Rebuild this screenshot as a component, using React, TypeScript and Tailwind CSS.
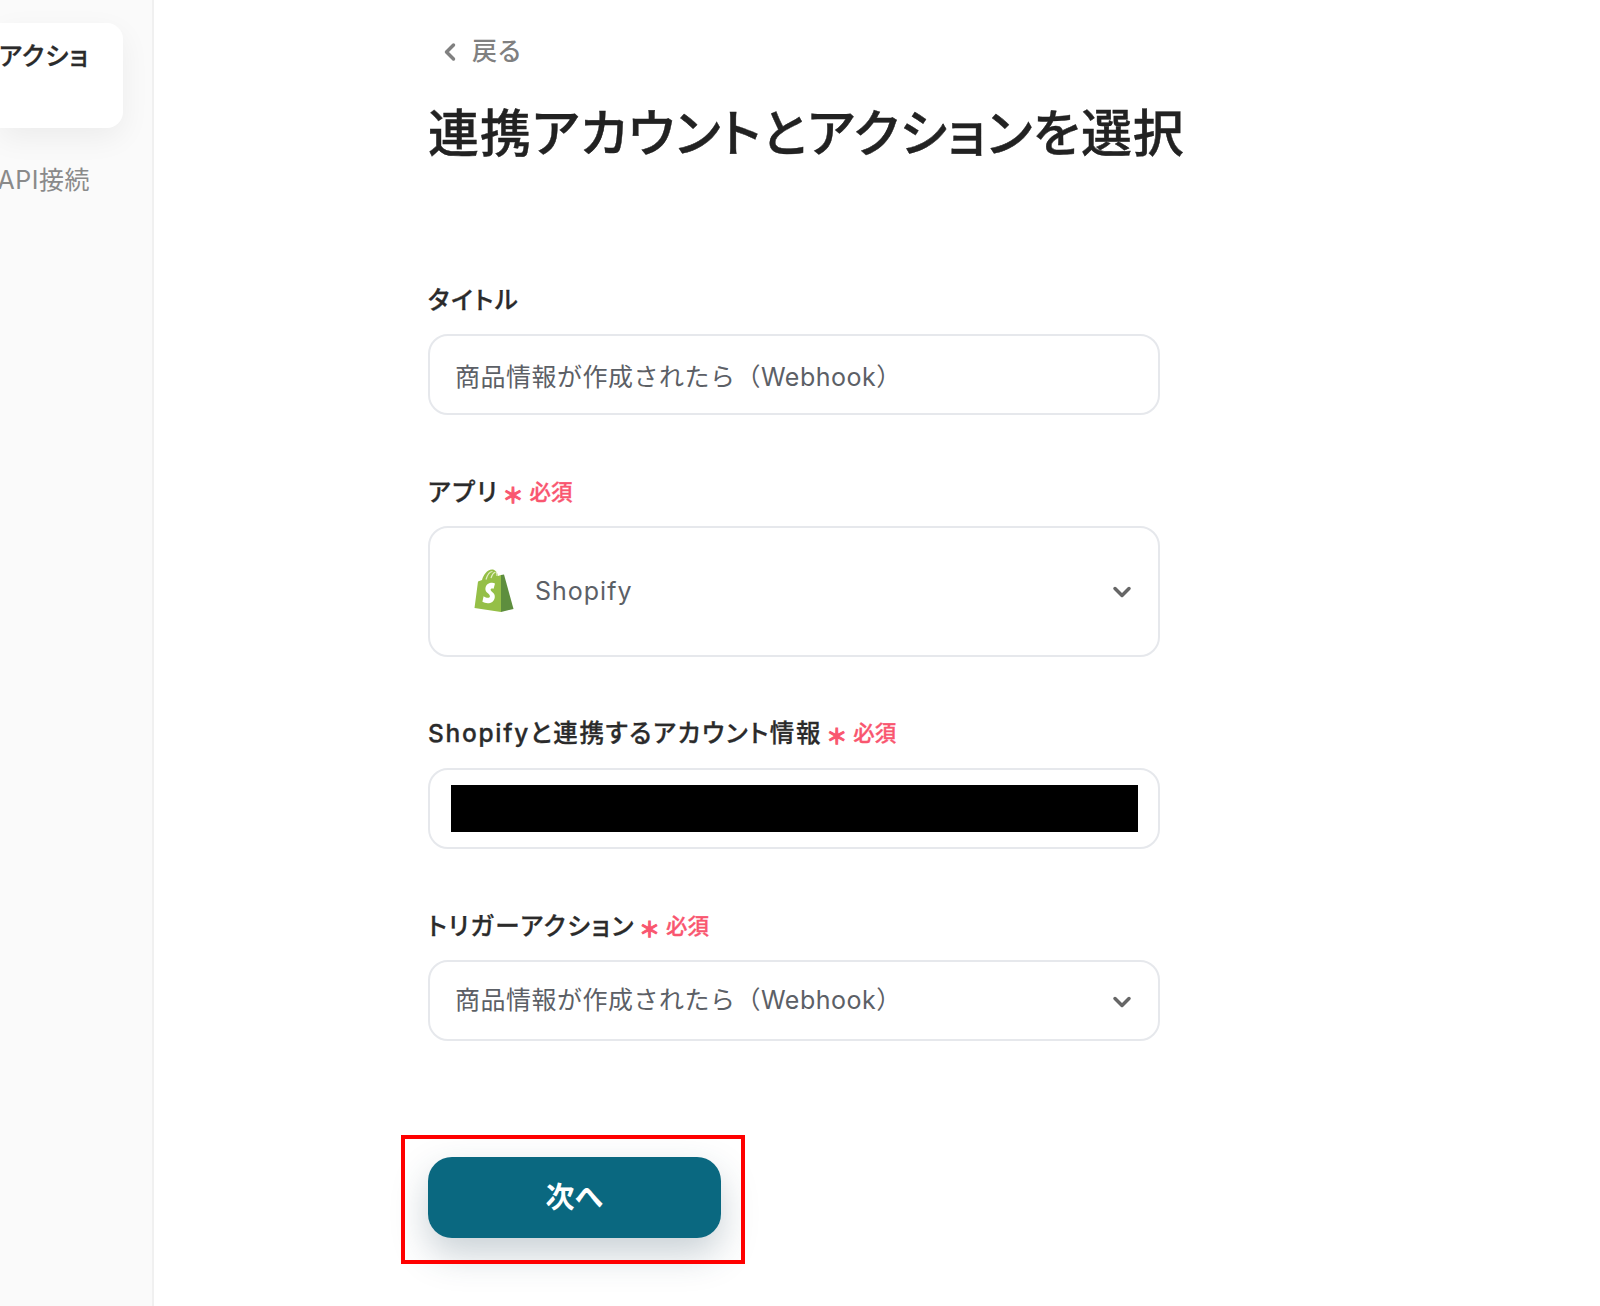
import { ChevronDown, ChevronLeft } from "lucide-react"

const fontClass = "font-['Inter','Noto_Sans_CJK_JP',sans-serif]"

function Required() {
  return (
    <span className="ml-[6px] flex items-center text-[#f9566f] [font-feature-settings:'palt']">
      <span className="text-[21px] leading-none font-bold translate-y-[3px] [-webkit-text-stroke:1px_#f9566f]">＊</span>
      <span className="ml-[6px] text-[21.5px] leading-none font-medium tracking-normal translate-y-[1px] [-webkit-text-stroke:0.3px_#f9566f]">必須</span>
    </span>
  )
}

function Label({ text, required }: { text: string; required?: boolean }) {
  return (
    <div className="flex h-8 items-center text-[24.5px] leading-8 font-medium tracking-[1.7px] whitespace-nowrap text-[#2b2b2b] [font-feature-settings:'palt'] [-webkit-text-stroke:0.3px_#2b2b2b]">
      <span>{text}</span>
      {required && <Required />}
    </div>
  )
}

function ShopifyLogo() {
  return (
    <svg width="40" height="44" viewBox="0 0 40 44" className="shrink-0 -translate-y-[2px]">
      <path d="M27 7 L30 6.5 L39.5 41 L27 44 Z" fill="#5e8e3e" />
      <path d="M27 7 L24 8 C23 4 21 1.5 18 1.5 C13 1.5 9.5 7 8 12 L4 13.5 L0.5 40 L27 44 Z" fill="#95bf47" />
      <path d="M12 11.5 C13.5 6.5 16 3.5 18.5 3.5 M17 10 C18 7 19 5 21 4.2 M23 8 C23.2 6 22.6 4.5 21.8 3.8" fill="none" stroke="#e4efc6" strokeWidth="1.2" />
      <path
        d="M21 15.5 C18 14 12 15 11.4 20.5 C11 25 16.2 25.6 15.9 28.4 C15.7 30.2 12.8 30.4 9.6 28.2 L8.4 33.8 C12.5 36.2 20 36 20.8 29.2 C21.3 24.6 16.4 24 16.6 21.6 C16.7 20.4 18.4 20 19.6 20.8 Z"
        fill="#ffffff"
      />
    </svg>
  )
}

export default function App() {
  return (
    <div className={`flex h-[1306px] w-[1600px] overflow-hidden bg-white ${fontClass}`}>
      <aside className="flex h-full w-[154px] shrink-0 flex-col border-r-2 border-[#f0f0f0] bg-[#fafafa] pt-[23px]">
        <div className="flex h-[105px] w-[123px] justify-end overflow-hidden rounded-r-[16px] bg-white pt-[17px] pr-[34px] shadow-[0_10px_30px_rgba(0,0,0,0.06)]">
          <span className="text-[25px] leading-8 font-medium tracking-[1px] whitespace-nowrap text-[#2b2b2b] [font-feature-settings:'palt'] [-webkit-text-stroke:0.3px_#2b2b2b]">アクショ</span>
        </div>
        <div className="mt-[36px] flex w-[123px] justify-end overflow-hidden pr-[33px]">
          <span className="text-[25px] leading-8 tracking-[0.5px] whitespace-nowrap text-[#8a8a8a]">API接続</span>
        </div>
      </aside>

      <main className="flex min-w-0 flex-1 flex-col pl-[274px]">
        <div className="mt-[36px] flex h-8 items-center text-[25px] font-medium text-[#808080]">
          <ChevronLeft className="ml-[8px] mr-[8px] h-7 w-7" strokeWidth={3} />
          <span>戻る</span>
        </div>

        <h1 className="mt-[34px] h-[64px] text-[51px] leading-[64px] font-medium tracking-[0.9px] whitespace-nowrap text-[#222222] [font-feature-settings:'palt'] [-webkit-text-stroke:0.4px_#222222]">
          連携アカウントとアクションを選択
        </h1>

        <div className="mt-[118px]">
          <Label text="タイトル" />
        </div>
        <div className="mt-[18px] flex h-[81px] w-[732px] items-center rounded-[20px] border-2 border-[#e6e8ec] px-[25px] pt-[6px] text-[25px] tracking-[0.5px] text-[#5c6066]">
          商品情報が作成されたら（Webhook）
        </div>

        <div className="mt-[61px]">
          <Label text="アプリ" required />
        </div>
        <div className="mt-[18px] flex h-[131px] w-[732px] items-center rounded-[20px] border-2 border-[#e6e8ec] pr-[22px] pl-[44px] text-[25px] tracking-[1px] text-[#5c6066]">
          <ShopifyLogo />
          <span className="ml-[21px] flex-1">Shopify</span>
          <ChevronDown className="h-7 w-7 text-[#666666]" strokeWidth={3} />
        </div>

        <div className="mt-[60px]">
          <Label text="Shopifyと連携するアカウント情報" required />
        </div>
        <div className="mt-[19px] flex h-[81px] w-[732px] items-center rounded-[20px] border-2 border-[#e6e8ec] pl-[21px]">
          <div className="h-[47px] w-[687px] bg-black" />
        </div>

        <div className="mt-[61px]">
          <Label text="トリガーアクション" required />
        </div>
        <div className="mt-[18px] flex h-[81px] w-[732px] items-center justify-between rounded-[20px] border-2 border-[#e6e8ec] pr-[22px] pl-[25px] pt-[1px] text-[25px] tracking-[0.5px] text-[#5c6066]">
          <span>商品情報が作成されたら（Webhook）</span>
          <ChevronDown className="h-7 w-7 text-[#666666] translate-y-[1px]" strokeWidth={3} />
        </div>

        <div className="relative mt-[116px] h-[81px] w-[293px]">
          <button
            type="button"
            className="h-full w-full rounded-[24px] bg-[#0a6880] text-[29px] font-bold text-white shadow-[0_16px_36px_rgba(40,70,90,0.25)]"
          >
            次へ
          </button>
          <div className="pointer-events-none absolute -top-[22px] -right-[24px] -bottom-[26px] -left-[27px] border-4 border-[#ff0000]" />
        </div>
      </main>
    </div>
  )
}
